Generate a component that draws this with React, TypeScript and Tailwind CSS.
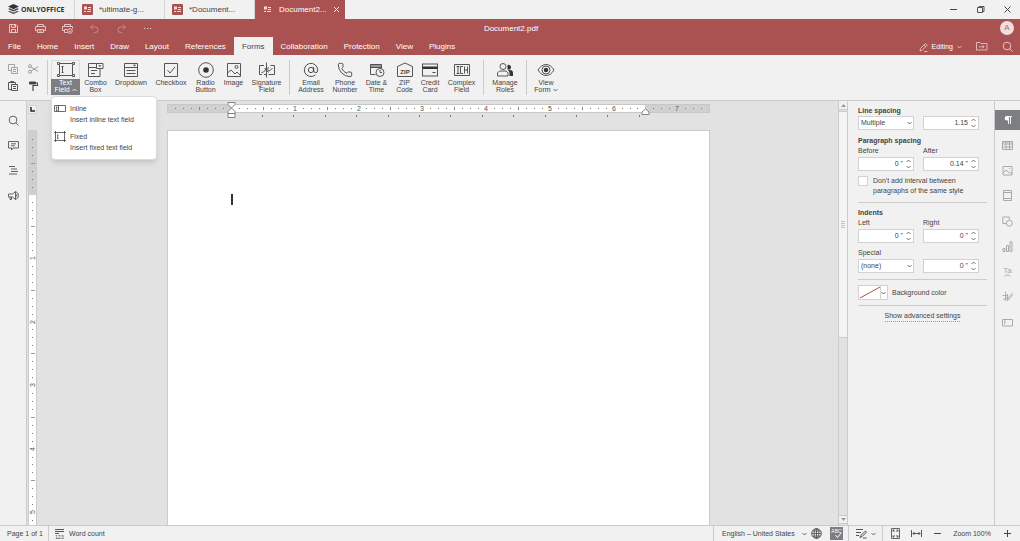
import React, { ReactNode, useEffect, useRef, useState } from "react";
import { AtSign, Phone } from "lucide-react";

type IconProps = { w?: number; h?: number; className?: string; children: ReactNode };

function Icon({ w = 20, h = 16, className = "", children }: IconProps) {
  return (
    <svg
      width={w}
      height={h}
      viewBox={`0 0 ${w} ${h}`}
      fill="none"
      stroke="currentColor"
      className={`shrink-0 ${className}`}
      aria-hidden="true"
    >
      {children}
    </svg>
  );
}

function Chevron({ up = false }: { up?: boolean }) {
  return (
    <Icon w={5} h={4} className="inline-block">
      <path d={up ? "M.5 3 2.5 1l2 2" : "M.5 1l2 2 2-2"} strokeWidth=".8" />
    </Icon>
  );
}

function Separator() {
  return <span className="w-px self-stretch bg-[#cbcbcb]" />;
}

/* ---------- title bar ---------- */

function FormBadge({ active = false }: { active?: boolean }) {
  return (
    <Icon w={11} h={11}>
      {!active && <rect width="11" height="11" rx="1" fill="#aa5252" stroke="none" />}
      <g stroke="#f5dcdc">
        <rect x="2.5" y="3" width="2" height="2" />
        <path d="M6 3.5h3M6 5.5h3M2 7.5h2M5 7.5h4" />
      </g>
    </Icon>
  );
}

function DocTab({ title, active = false }: { title: string; active?: boolean }) {
  return (
    <div
      className={
        active
          ? "flex w-[90px] items-center bg-[#aa5252] pl-[7px] text-white"
          : "flex w-[90px] items-center border-r border-[#d5d5d5] pl-[7px] text-[#444]"
      }
    >
      <FormBadge active={active} />
      <button className="ml-[6px] w-[50px] truncate text-left">{title}</button>
      {active && (
        <button aria-label="Close tab" className="ml-1">
          <Icon w={7} h={7}>
            <path d="M1 1l5 5M6 1L1 6" strokeWidth=".9" />
          </Icon>
        </button>
      )}
    </div>
  );
}

function TitleBar() {
  return (
    <div className="flex h-[19px] bg-[#f1f1f1]">
      <div className="flex w-[75px] items-center gap-[2px] border-r border-[#d5d5d5] pl-2">
        <Icon w={11} h={11} className="text-[#333]">
          <path d="M5.5 0 11 2.6 5.5 5.2 0 2.6z" fill="#333" stroke="none" />
          <path d="M1.8 4.2 0 5l5.5 2.6L11 5l-1.8-.8-3.7 1.8z" fill="#444" stroke="none" />
          <path d="M1.8 6.7 0 7.6l5.5 2.7L11 7.6l-1.8-.9-3.7 1.8z" fill="#666" stroke="none" />
        </Icon>
        <span className="font-['Open_Sans',sans-serif] text-[7px] font-bold text-[#333]">ONLYOFFICE</span>
      </div>
      <DocTab title="*ultimate-g..." />
      <DocTab title="*Document..." />
      <DocTab title="Document2..." active />
      <div className="ml-auto flex items-center gap-[18px] pr-2 text-[#444]">
        <button aria-label="Minimize">
          <Icon w={9} h={9}>
            <path d="M1 4.5h7" />
          </Icon>
        </button>
        <button aria-label="Restore">
          <Icon w={9} h={9}>
            <path d="M1.5 2.5h5v5h-5zM3 2.5v-1h5v5H6.5" strokeWidth=".9" />
          </Icon>
        </button>
        <button aria-label="Close">
          <Icon w={9} h={9}>
            <path d="M1.5 1.5l6 6M7.5 1.5l-6 6" />
          </Icon>
        </button>
      </div>
    </div>
  );
}

/* ---------- header ---------- */

const TABS = [
  "File", "Home", "Insert", "Draw", "Layout", "References", "Forms",
  "Collaboration", "Protection", "View", "Plugins",
];

function QuickAccess() {
  return (
    <div className="flex flex-1 items-center gap-4 pl-2 text-[#ecd0d0]">
      <button aria-label="Save">
        <Icon w={11} h={11}>
          <path d="M1.5 1.500h6.500l1.500 1.500v6.500h-8zM3.500 1.500v3h4v-3M3.500 9.500v-3h4v3M6.500 2v1.500" strokeWidth=".9" />
        </Icon>
      </button>
      <button aria-label="Print">
        <Icon w={11} h={11}>
          <path d="M2.5 3.5v-2h6v2M2.5 7.5h-2v-4h10v4h-2M2.5 6.5h6v3h-6zM4 8h3" strokeWidth=".9" />
        </Icon>
      </button>
      <button aria-label="Quick print">
        <Icon w={11} h={11}>
          <path d="M2.5 3.5v-2h6v2M2.5 7.5h-2v-4h10v2M2.5 9.5v-3h3M2.5 9.5h3" strokeWidth=".9" />
          <circle cx="8" cy="8" r="2.3" strokeWidth=".9" />
          <path d="M7 8l1 1 1-1.5" strokeWidth=".7" />
        </Icon>
      </button>
      <button aria-label="Undo" className="opacity-45">
        <Icon w={11} h={11}>
          <path d="M4 1.5L1.5 4 4 6.5M1.5 4h5a2.500 2.750 0 0 1 0 5.500H5" />
        </Icon>
      </button>
      <button aria-label="Redo" className="opacity-45">
        <Icon w={11} h={11}>
          <path d="M7 1.5L9.500 4 7 6.500M9.500 4h-5a2.500 2.750 0 0 0 0 5.500H6" />
        </Icon>
      </button>
      <button aria-label="More">
        <Icon w={9} h={3}>
          <path d="M1 1.5h1.200M4 1.5h1.200M7 1.5h1.200" />
        </Icon>
      </button>
    </div>
  );
}

function Header() {
  return (
    <header className="bg-[#aa5252] text-white">
      <div className="flex h-[18px] items-center">
        <QuickAccess />
        <span className="pt-px">Document2.pdf</span>
        <div className="flex flex-1 justify-end pr-[6px]">
          <button className="size-[14px] rounded-full bg-[#f0dfdf] text-center leading-[14px] text-[#b06a6a]">A</button>
        </div>
      </div>
      <div className="flex h-[18px]">
        <nav className="flex">
          {TABS.map((t) => (
            <button key={t} className={t === "Forms" ? "bg-[#f1f1f1] px-2 pt-px text-[#444]" : "px-2 pt-px"}>
              {t}
            </button>
          ))}
        </nav>
        <div className="ml-auto flex items-center gap-[14px] pr-[7px] text-[#ecd0d0]">
          <button className="flex items-center gap-1 pt-px text-[7px]">
            <Icon w={9} h={10}>
              <path d="M1 9l.5-2.5L6.500 1.500l1.700 1.700-5 5zM5 3l1.700 1.700M5 9.500h3.500" strokeWidth=".8" />
            </Icon>
            <span className="text-white">Editing</span>
            <Chevron />
          </button>
          <button aria-label="Open file location">
            <Icon w={12} h={10}>
              <path d="M.5 1.500h3.500l1 1h6v6.500H.5zM3 5.800h5M6.500 4.300L8 5.800 6.500 7.300" strokeWidth=".8" />
            </Icon>
          </button>
          <button aria-label="Search">
            <Icon w={11} h={11}>
              <circle cx="5" cy="5" r="3.8" strokeWidth=".9" />
              <path d="M8 8l2.5 2.5" strokeWidth=".9" />
            </Icon>
          </button>
        </div>
      </div>
    </header>
  );
}

/* ---------- ribbon ---------- */

const ribbonIcons = {
  text: (
    <Icon>
      <path
        d="M1.5.5h2v2h-2zM16.5.5h2v2h-2zM1.5 12.5h2v2h-2zM16.5 12.5h2v2h-2zM4 1.5h12.500M4 13.500h12.500M3.500 3v9M16.500 3v9M5.500 4.500h2M6.500 4.500v6M5.500 10.500h2"
        strokeWidth=".9"
      />
    </Icon>
  ),
  combo: (
    <Icon>
      <path d="M10.5 1.5H2.500v13h11.500v-8M2.500 5.500h8M5 8.500h6M5 11.500h4M10.500 1.500h6.500v5h-6.500z" strokeWidth=".9" />
      <path d="M12.300 3.200h3l-1.500 1.800z" fill="currentColor" stroke="none" />
    </Icon>
  ),
  dropdown: (
    <Icon>
      <path d="M3.500 1.500h13v13h-13zM3.500 5.500h13M5.500 8.500h9M5.500 11.500h9" strokeWidth=".9" />
      <path d="M12 2.700h3l-1.500 1.800z" fill="currentColor" stroke="none" />
    </Icon>
  ),
  checkbox: (
    <Icon>
      <path d="M3.5 1.5h13v13h-13zM6.5 8l2.5 3 5-6" strokeWidth=".9" />
    </Icon>
  ),
  radio: (
    <Icon>
      <circle cx="10" cy="8" r="7.3" strokeWidth=".9" />
      <circle cx="10" cy="8" r="2.8" fill="#333" stroke="none" />
    </Icon>
  ),
  image: (
    <Icon>
      <path d="M3.5 1.5h13v13h-13zM3.5 11L7 8l4 4 2-2 3.500 3.500" strokeWidth=".9" />
      <circle cx="12.500" cy="5" r="1.500" strokeWidth=".9" />
    </Icon>
  ),
  signature: (
    <Icon>
      <path
        d="M7 3.500H2.500v9H5M13.500 3.500h4v9h-6M9.500.5v15M4.500 10.500c3-.5 5-2.500 5-5.500M7.500 6l4 4.500M11.500 5c-1 2-1 4 .5 4s1.500-2.500 3.500-2.500M7 12.500h2"
        strokeWidth=".9"
      />
    </Icon>
  ),
  email: <AtSign size={16} strokeWidth={1.4} />,
  phone: <Phone size={16} strokeWidth={1.4} />,
  date: (
    <Icon>
      <path d="M3.500 2.500h11v3h-11z" fill="#999" stroke="none" />
      <path d="M8.500 12.500h-5v-10h11v4M3.500 5.500h11" strokeWidth=".9" />
      <circle cx="13" cy="10.500" r="4" strokeWidth=".9" />
      <path d="M13 8v2.500h2" strokeWidth=".9" />
    </Icon>
  ),
  zip: (
    <Icon>
      <path d="M2.500 14.500v-10L10 1l7.500 3.500v10z" strokeWidth=".9" />
      <text x="10" y="12" textAnchor="middle" fontSize="6" fontWeight="bold" fill="#444" stroke="none">ZIP</text>
    </Icon>
  ),
  credit: (
    <Icon>
      <rect x="2.500" y="2" width="15" height="12" strokeWidth=".9" />
      <path d="M2.500 4.500h15V7h-15z" fill="#333" stroke="none" />
      <path d="M12.500 10.500h3" />
    </Icon>
  ),
  complex: (
    <Icon>
      <path d="M2.500 2.500h15v11h-15zM4.500 4.500h3M6 4.500v7M4.500 11.500h3M11 4.500H8.500v7H11M12.500 4.500v7M15.500 4.500v7M12.500 8h3" strokeWidth=".9" />
    </Icon>
  ),
  roles: (
    <Icon>
      <circle cx="8" cy="4.500" r="3" strokeWidth=".9" />
      <path d="M2.500 14v-2c0-2 1.500-3 3.500-3h4c1.500 0 2.500.8 3 2v3z" strokeWidth=".9" />
      <path d="M12.500 3a2.500 2.500 0 1 1 0 4.500zM14.500 14v-3c0-1-.5-2-1.500-3h2c2 0 3 1.200 3 3v3z" fill="#333" stroke="none" />
    </Icon>
  ),
  view: (
    <Icon>
      <path d="M2 8c2-3.500 5-5.500 8-5.500s6 2 8 5.500c-2 3.500-5 5.500-8 5.500S4 11.500 2 8z" strokeWidth=".9" />
      <circle cx="10" cy="8" r="4" strokeWidth=".9" />
      <circle cx="10" cy="8" r="2.200" fill="#333" stroke="none" />
    </Icon>
  ),
};

type RibbonItem = { icon: keyof typeof ribbonIcons; lines: string[]; width: string; chevron?: boolean };

const GROUPS: RibbonItem[][] = [
  [
    { icon: "combo", lines: ["Combo", "Box"], width: "w-[31px]" },
    { icon: "dropdown", lines: ["Dropdown"], width: "w-[40px]" },
    { icon: "checkbox", lines: ["Checkbox"], width: "w-[40px]" },
    { icon: "radio", lines: ["Radio", "Button"], width: "w-[29px]" },
    { icon: "image", lines: ["Image"], width: "w-[27px]" },
    { icon: "signature", lines: ["Signature", "Field"], width: "w-[39px]" },
  ],
  [
    { icon: "email", lines: ["Email", "Address"], width: "w-[36px]" },
    { icon: "phone", lines: ["Phone", "Number"], width: "w-[32px]" },
    { icon: "date", lines: ["Date &", "Time"], width: "w-[31px]" },
    { icon: "zip", lines: ["ZIP", "Code"], width: "w-[25px]" },
    { icon: "credit", lines: ["Credit", "Card"], width: "w-[26px]" },
    { icon: "complex", lines: ["Complex", "Field"], width: "w-[37px]" },
  ],
  [{ icon: "roles", lines: ["Manage", "Roles"], width: "w-[36px]" }],
  [{ icon: "view", lines: ["View", "Form"], width: "w-[32px]", chevron: true }],
];

function RibbonButton({ item }: { item: RibbonItem }) {
  return (
    <button className={`flex flex-col items-center whitespace-nowrap pt-[2px] text-[#444] ${item.width}`}>
      {ribbonIcons[item.icon]}
      <span className="mt-px flex flex-col items-center leading-[7px]">
        {item.lines.map((line, i) => (
          <span key={line} className="flex items-center gap-[2px]">
            {line}
            {item.chevron && i === item.lines.length - 1 && <Chevron />}
          </span>
        ))}
      </span>
    </button>
  );
}

function FieldMenu() {
  return (
    <div className="absolute left-0 top-full z-10 mt-px flex w-[106px] flex-col gap-[6px] rounded-sm border border-[#dcdcdc] bg-white px-[2px] py-[6px] leading-[11px] text-[#444] shadow-md">
      <button className="flex gap-1 text-left">
        <Icon w={12} h={11}>
          <path d="M.5 2.5h11v6H.5zM2 4h1.500M2.700 4v3.500M2 7.500h1.500M4.500 2.500v6" strokeWidth=".8" />
        </Icon>
        <span>Inline<br />Insert inline text field</span>
      </button>
      <button className="flex gap-1 text-left">
        <Icon w={12} h={11}>
          <path d="M0 1.500h12M0 9.500h12M1.500 0v11M10.500 0v11M3 4h1.500M3.700 4v3.500M3 7.500h1.500" strokeWidth=".8" />
        </Icon>
        <span>Fixed<br />Insert fixed text field</span>
      </button>
    </div>
  );
}

function Ribbon() {
  return (
    <div className="flex h-[46px] border-b border-[#cbcbcb] bg-[#f1f1f1] py-[5px] text-[7px]">
      <div className="grid w-[51px] grid-cols-2 items-center justify-items-center border-r-4 border-transparent pl-[3px] pr-[4px] text-[#444]">
        <button aria-label="Copy" className="opacity-50">
          <Icon w={10} h={10}>
            <path d="M3.500 6.500h-3v-6h6v3M3.500 3.500h6v6h-6zM5 5.500h3M5 7.500h3" strokeWidth=".9" />
          </Icon>
        </button>
        <button aria-label="Cut" className="opacity-60">
          <Icon w={11} h={10}>
            <circle cx="2" cy="2.200" r="1.500" strokeWidth=".8" />
            <circle cx="2" cy="7.800" r="1.500" strokeWidth=".8" />
            <path d="M3.200 3l7 4.500M3.200 7l7-4.500" strokeWidth=".8" />
          </Icon>
        </button>
        <button aria-label="Paste">
          <Icon w={10} h={10}>
            <path d="M3 8.500H.5v-7h7V3M2.500 1.500v-1h3v1M3.500 3.500h6v6h-6zM5 5.500h3M5 7.500h3" strokeWidth=".9" />
          </Icon>
        </button>
        <button aria-label="Copy style">
          <Icon w={10} h={10}>
            <path d="M1.500 1h6v2h-6z" fill="currentColor" />
            <path d="M8 2h1.500v2.500H5V6M5 6v4" strokeWidth="1.200" />
          </Icon>
        </button>
      </div>
      <div className="relative before:absolute before:-left-[4px] before:inset-y-0 before:w-px before:bg-[#cbcbcb]">
        <button className="flex h-[35px] w-[29px] flex-col items-center border border-b-0 border-[#dcdcdc] pt-px text-white">
          <span className="text-[#444]">{ribbonIcons.text}</span>
          <span className="mt-px flex w-[29px] flex-1 flex-col items-center bg-[#7d7e81] leading-[7px]">
            <span>Text</span>
            <span className="flex items-center gap-[2px]">Field<Chevron up /></span>
          </span>
        </button>
        <FieldMenu />
      </div>
      {GROUPS.map((group, i) => (
        <div key={i} className="flex">
          {i > 0 && <div className="mx-[3px] flex"><Separator /></div>}
          {group.map((item) => (
            <RibbonButton key={item.icon} item={item} />
          ))}
        </div>
      ))}
    </div>
  );
}

/* ---------- left side ---------- */

function LeftBar() {
  return (
    <aside className="flex w-[27px] flex-col items-center gap-[14px] border-r border-[#cbcbcb] bg-[#f1f1f1] pt-[14px] text-[#555]">
      <button aria-label="Find">
        <Icon w={11} h={11}>
          <circle cx="5" cy="5" r="3.900" strokeWidth=".9" />
          <path d="M8 8l2.500 2.500" strokeWidth=".9" />
        </Icon>
      </button>
      <button aria-label="Comments">
        <Icon w={11} h={11}>
          <path d="M.5 1.500h10V8H5l-1.500 2V8h-3zM3 3.800h5M3 5.800h4" strokeWidth=".9" />
        </Icon>
      </button>
      <button aria-label="Headings">
        <Icon w={11} h={11}>
          <path d="M1 1.500h6M3 4h6M3 6.500h7M1 9h8" strokeWidth=".9" />
        </Icon>
      </button>
      <button aria-label="Feedback">
        <Icon w={11} h={11}>
          <path d="M.5 4h4l3-2.500v8L4.500 7h-4zM2 7v2.500h1.500V7M7.500 2c2 0 2.800 1.500 2.800 3.500S9.500 9 7.500 9M8 4.300c1 .3 1 2 0 2.400" strokeWidth=".9" />
        </Icon>
      </button>
    </aside>
  );
}

const range = (n: number) => Array.from({ length: n }, (_, i) => i);

function VerticalRuler() {
  const box = useRef<HTMLDivElement>(null);
  const [length, setLength] = useState(0);

  useEffect(() => {
    if (!box.current) return;
    const measure = () => setLength(box.current ? box.current.clientHeight : 0);
    measure();
    const observer = new ResizeObserver(measure);
    observer.observe(box.current);
    return () => observer.disconnect();
  }, []);

  return (
    <div className="flex w-[11px] flex-col overflow-hidden bg-[#e2e2e2] pl-px">
      <button aria-label="Tab stop" className="mt-1 flex size-[9px] shrink-0 items-center justify-center border border-[#d5d5d5] bg-[#f1f1f1] text-[#222]">
        <Icon w={5} h={5}>
          <path d="M1 0v4h4" strokeWidth="1.500" />
        </Icon>
      </button>
      <div ref={box} className="mt-4 min-h-0 flex-1 overflow-hidden">
        <svg width="9" height={length} className="block" aria-hidden="true">
          <rect width="9" height={length} fill="#fff" />
          <rect width="9" height="65" fill="#cfcfcf" />
          <path d={`M.5 0v${length}M8.500 0v${length}`} stroke="#cbcbcb" />
          {range(Math.ceil(length / 7.94)).map((i) => {
            const n = i - 8;
            const y = Math.round(64.5 + n * 7.94);
            if (y < 2 || y > length - 4) return null;
            if (n % 8 === 0) {
              return n > 0 ? (
                <text key={i} fontSize="7" fill="#555" textAnchor="middle" transform={`translate(7 ${y}) rotate(-90)`}>
                  {n / 8}
                </text>
              ) : null;
            }
            return n % 4 === 0 ? (
              <rect key={i} x="3" y={y} width="4" height="1" fill="#999" />
            ) : (
              <rect key={i} x="4" y={y} width="1" height="1" fill="#777" />
            );
          })}
        </svg>
      </div>
    </div>
  );
}

/* ---------- canvas ---------- */

function HorizontalRuler() {
  return (
    <svg width="543" height="17" className="block overflow-visible" aria-hidden="true">
      <rect x="0" y="3" width="543" height="9" fill="#d0d0d0" />
      <rect x="64" y="3" width="414" height="9" fill="#fff" />
      <path d="M0 3.500h543M0 11.500h543M.5 3v9M542.500 3v9" stroke="#c8c8c8" />
      {range(68).map((i) => {
        const n = i - 8;
        const x = Math.round(64 + n * 7.97);
        if (x < 3 || x > 538 || n === 0 || n === 52) return null;
        if (n % 8 === 0) {
          return (
            <text key={i} x={x} y="10" fontSize="7" fill="#555" textAnchor="middle">
              {n / 8}
            </text>
          );
        }
        return n % 4 === 0 ? (
          <rect key={i} x={x} y="6" width="1" height="3" fill="#888" />
        ) : (
          <rect key={i} x={x} y="7" width="1" height="1" fill="#777" />
        );
      })}
      {range(13).map((i) => (
        <rect key={i} x={Math.round(95 + i * 31.4)} y="14" width="1" height="2" fill="#777" />
      ))}
      <path d="M61 1.500h7v2L64.500 7 61 3.500zM61 12.500v-2L64.500 7 68 10.500v2zM61 12.500h7v4h-7z" fill="#fff" stroke="#777" strokeWidth=".9" />
      <path d="M475 13.500V11l3.500-3 3.500 3v2.500z" fill="#fff" stroke="#777" strokeWidth=".9" />
    </svg>
  );
}

function Canvas() {
  return (
    <main className="flex min-w-0 flex-1 flex-col items-center overflow-hidden bg-[#e2e2e2]">
      <HorizontalRuler />
      <div className="mt-3 w-[543px] flex-1 border border-b-0 border-[#cbcbcb] bg-white pl-[63px] pt-[63px]">
        <div className="h-[11px] w-[2px] bg-[#333]" />
      </div>
    </main>
  );
}

function ScrollBar() {
  return (
    <div className="flex w-[10px] flex-col border-x border-[#cbcbcb] bg-[#e2e2e2] text-[#999]">
      <button aria-label="Scroll up" className="flex h-[9px] items-center justify-center border-b border-[#cbcbcb] bg-[#f1f1f1]">
        <Icon w={5} h={3}><path d="M0 3l2.500-3L5 3z" fill="currentColor" stroke="none" /></Icon>
      </button>
      <div className="flex flex-1 flex-col">
        <div className="mt-px flex h-[56%] flex-col items-center justify-center border-y border-[#cbcbcb] bg-[#f4f4f4]">
          <Icon w={4} h={7}><path d="M0 .5h4M0 2.500h4M0 4.500h4M0 6.500h4" stroke="#c4c4c4" /></Icon>
        </div>
      </div>
      <button aria-label="Scroll down" className="mb-px flex h-[9px] items-center justify-center border-y border-[#cbcbcb] bg-[#f1f1f1]">
        <Icon w={5} h={3}><path d="M0 0l2.500 3L5 0z" fill="currentColor" stroke="none" /></Icon>
      </button>
    </div>
  );
}

/* ---------- right panel ---------- */

type FieldProps = { label: string; value: string; id: string; showLabel?: boolean };

function Spin({ label, value, id, showLabel = true }: FieldProps) {
  return (
    <div>
      {showLabel && <label htmlFor={id} className="block h-[11px] leading-[10px]">{label}</label>}
      <div className="flex h-[14px] w-[56px] border border-[#d2d2d2] bg-white">
        <input
          id={id}
          aria-label={label}
          defaultValue={value}
          className="w-[44px] bg-transparent text-right outline-none"
        />
        <div className="flex flex-col justify-between py-px pl-[3px] text-[#555]">
          <button aria-label={`Increase ${label}`} className="flex"><Chevron up /></button>
          <button aria-label={`Decrease ${label}`} className="flex"><Chevron /></button>
        </div>
      </div>
    </div>
  );
}

function Select({ label, value, id, showLabel = true }: FieldProps) {
  return (
    <div>
      {showLabel && <label htmlFor={id} className="block h-[11px] leading-[10px]">{label}</label>}
      <div className="relative h-[14px] w-[56px]">
        <select
          id={id}
          aria-label={label}
          className="block h-full w-full appearance-none border border-[#d2d2d2] bg-white pl-[2px] leading-[12px] outline-none"
        >
          <option>{value}</option>
        </select>
        <span className="pointer-events-none absolute inset-y-0 right-[2px] flex items-center">
          <Chevron />
        </span>
      </div>
    </div>
  );
}

function Divider() {
  return <hr className="mr-[7px] border-[#cbcbcb]" />;
}

function ParagraphPanel() {
  return (
    <section className="w-[146px] bg-[#f1f1f1] pl-[10px] pt-[5px] text-[7px] leading-[10px] text-[#444]">
      <h2 className="font-bold">Line spacing</h2>
      <div className="flex items-end gap-[9px]">
        <Select id="line-rule" label="Line spacing rule" value="Multiple" showLabel={false} />
        <Spin id="line-at" label="Line spacing value" value="1.15" showLabel={false} />
      </div>
      <h2 className="mt-[6px] font-bold">Paragraph spacing</h2>
      <div className="flex gap-[9px]">
        <Spin id="before" label="Before" value={'0 "'} />
        <Spin id="after" label="After" value={'0.14 "'} />
      </div>
      <div className="mt-[5px] flex gap-[5px] pb-[6px]">
        <input
          id="no-interval"
          type="checkbox"
          className="size-[10px] shrink-0 appearance-none border border-[#d2d2d2] bg-white"
        />
        <label htmlFor="no-interval">Don't add interval between<br />paragraphs of the same style</label>
      </div>
      <Divider />
      <h2 className="mt-[5px] font-bold">Indents</h2>
      <div className="flex gap-[9px]">
        <Spin id="left" label="Left" value={'0 "'} />
        <Spin id="right" label="Right" value={'0 "'} />
      </div>
      <div className="mt-[5px] flex items-end gap-[9px] pb-[6px]">
        <Select id="special" label="Special" value="(none)" />
        <Spin id="special-by" label="Special value" value={'0 "'} showLabel={false} />
      </div>
      <Divider />
      <div className="my-[5px] flex items-center gap-1">
        <button aria-label="Background color" className="flex h-[15px] w-[30px] items-center border border-[#d2d2d2] bg-white">
          <Icon w={22} h={13}>
            <path d="M1 12L21 1" stroke="#b05050" />
            <path d="M21.500 0v13" stroke="#d2d2d2" />
          </Icon>
          <Chevron />
        </button>
        <span>Background color</span>
      </div>
      <Divider />
      <div className="mr-[7px] mt-[5px] flex justify-center">
        <a href="#advanced" className="border-b border-dotted border-[#999]">Show advanced settings</a>
      </div>
    </section>
  );
}

const STRIP: { label: string; icon: ReactNode }[] = [
  { label: "Table settings", icon: <path d="M.5 1.500h10v8H.5zM.5 4h10M.5 7h10M4 1.500v8M7.500 1.500v8M.5 2h10" /> },
  { label: "Image settings", icon: <path d="M1 1.500h9V10H1zM1 8l3-3 3.500 3 1-1L10 9M7 3.500h1" /> },
  { label: "Header and footer settings", icon: <path d="M1.500.5h8v10h-8zM1.500 2.500h8M1.500 8.500h8" /> },
  { label: "Shape settings", icon: <path d="M4 7.500H.8V1h6.500v2.500M10.300 7.200a3 3 0 1 1-6 0 3 3 0 0 1 6 0z" /> },
  { label: "Chart settings", icon: <path d="M1 7.500h2v3H1zM4.500 4.500h2v6h-2zM8 .8h2v9.700H8z" /> },
  {
    label: "Text Art settings",
    icon: (
      <>
        <text x="5.500" y="7" fontSize="8" textAnchor="middle" fill="currentColor" stroke="none">Ta</text>
        <path d="M2.500 10.500c1.500-2 4.500-2 6 0" />
      </>
    ),
  },
  { label: "Signature settings", icon: <path d="M3.500.5V10M.5 4.500h5M1 8.500c2 0 4-1 4.500-3M5.500 9.500L6 7l4-4.500 1 1L7 8zM5.500 3v7" strokeWidth=".9" /> },
  { label: "Form settings", icon: <path d="M.5 2.500h10V9H.5zM2 4h1.500M2.700 4v3.500" /> },
];

function RightStrip() {
  return (
    <aside className="w-[26px] border-l border-[#cbcbcb] bg-[#f1f1f1] pt-[9px]">
      <div className="flex h-[222px] flex-col justify-between">
        <button aria-label="Paragraph settings" className="flex h-5 w-full items-center justify-center bg-[#7d7e81] text-white">
          <Icon w={8} h={8}>
            <path d="M4.500 0v8M6.500 0v8M3 .5h5" strokeWidth=".9" />
            <path d="M4.500 0H3a2 2 0 0 0 0 4.500h1.500z" fill="currentColor" stroke="none" />
          </Icon>
        </button>
        {STRIP.map((s) => (
          <button key={s.label} aria-label={s.label} className="flex h-5 w-full items-center justify-center text-[#aaa]">
            <Icon w={11} h={11}>{s.icon}</Icon>
          </button>
        ))}
      </div>
    </aside>
  );
}

/* ---------- status bar ---------- */

function StatusBar() {
  return (
    <footer className="flex h-4 items-center border-t border-[#cbcbcb] bg-[#f1f1f1] text-[7px] text-[#444]">
      <button className="w-[48px] whitespace-nowrap pl-[7px] text-left">Page 1 of 1</button>
      <Separator />
      <button className="ml-[6px] flex items-center gap-[5px]">
        <Icon w={9} h={10}>
          <path d="M0 .5h9M0 2.500h9M0 4.500h4" strokeWidth=".9" />
          <text x="4.500" y="10" fontSize="5" textAnchor="middle" fill="#444" stroke="none">123</text>
        </Icon>
        Word count
      </button>
      <div className="ml-auto flex items-center self-stretch">
        <Separator />
        <button className="ml-2 flex w-[85px] items-center justify-between whitespace-nowrap">
          English – United States <Chevron />
        </button>
        <button aria-label="Document language" className="ml-1">
          <Icon w={11} h={11}>
            <circle cx="5.500" cy="5.500" r="4.800" strokeWidth=".9" />
            <ellipse cx="5.500" cy="5.500" rx="2.300" ry="4.800" strokeWidth=".8" />
            <path d="M1 5.500h9M5.500 1v9M1.500 3h8M1.500 8h8" strokeWidth=".8" />
          </Icon>
        </button>
        <button aria-label="Spell checking" className="ml-2 flex h-[13px] w-[13px] items-center justify-center bg-[#7d7e81] text-white">
          <Icon w={11} h={11}>
            <text x="5.500" y="5" fontSize="5" textAnchor="middle" fill="#fff" stroke="none">ABC</text>
            <path d="M4.500 7l2 2.500L10 5" />
          </Icon>
        </button>
        <span className="ml-[5px] flex self-stretch"><Separator /></span>
        <button aria-label="Track changes" className="ml-[7px] flex items-center gap-1">
          <Icon w={11} h={11}>
            <path d="M0 1.500h7M0 4.500h5M0 7.500h3M4 9.500l.7-2L9.500 3l1 1.200L6 8.700zM7 10h3.500" strokeWidth=".9" />
          </Icon>
          <Chevron />
        </button>
        <span className="ml-[6px] flex self-stretch"><Separator /></span>
        <button aria-label="Fit to page" className="ml-2">
          <Icon w={9} h={11}>
            <path d="M.5.5h8v10h-8zM2 2l1.500 2M7 2L5.500 4M2 9l1.500-2M7 9L5.500 7M2 3.500V2h1.500M5.500 2H7v1.500M2 7.500V9h1.500M5.500 9H7V7.500" strokeWidth=".8" />
          </Icon>
        </button>
        <button aria-label="Fit to width" className="ml-[11px]">
          <Icon w={11} h={9}>
            <path d="M.5 1v7M10.500 1v7M2 4.500h7M3.500 3L2 4.500 3.500 6M7.500 3L9 4.500 7.500 6" strokeWidth=".9" />
          </Icon>
        </button>
        <button aria-label="Zoom out" className="ml-[11px]">
          <Icon w={9} h={9}><path d="M1 4.500h7" /></Icon>
        </button>
        <button className="ml-[7px] w-[46px] whitespace-nowrap">Zoom 100%</button>
        <button aria-label="Zoom in" className="ml-2 mr-2">
          <Icon w={9} h={9}><path d="M1 4.500h7M4.500 1v7" /></Icon>
        </button>
      </div>
    </footer>
  );
}

export default function App() {
  return (
    <div className="flex h-screen flex-col overflow-hidden bg-[#f1f1f1] font-['Liberation_Sans',Arial,sans-serif] text-[8px] leading-[10px]">
      <TitleBar />
      <Header />
      <Ribbon />
      <div className="flex min-h-0 flex-1">
        <LeftBar />
        <VerticalRuler />
        <Canvas />
        <ScrollBar />
        <ParagraphPanel />
        <RightStrip />
      </div>
      <StatusBar />
    </div>
  );
}
